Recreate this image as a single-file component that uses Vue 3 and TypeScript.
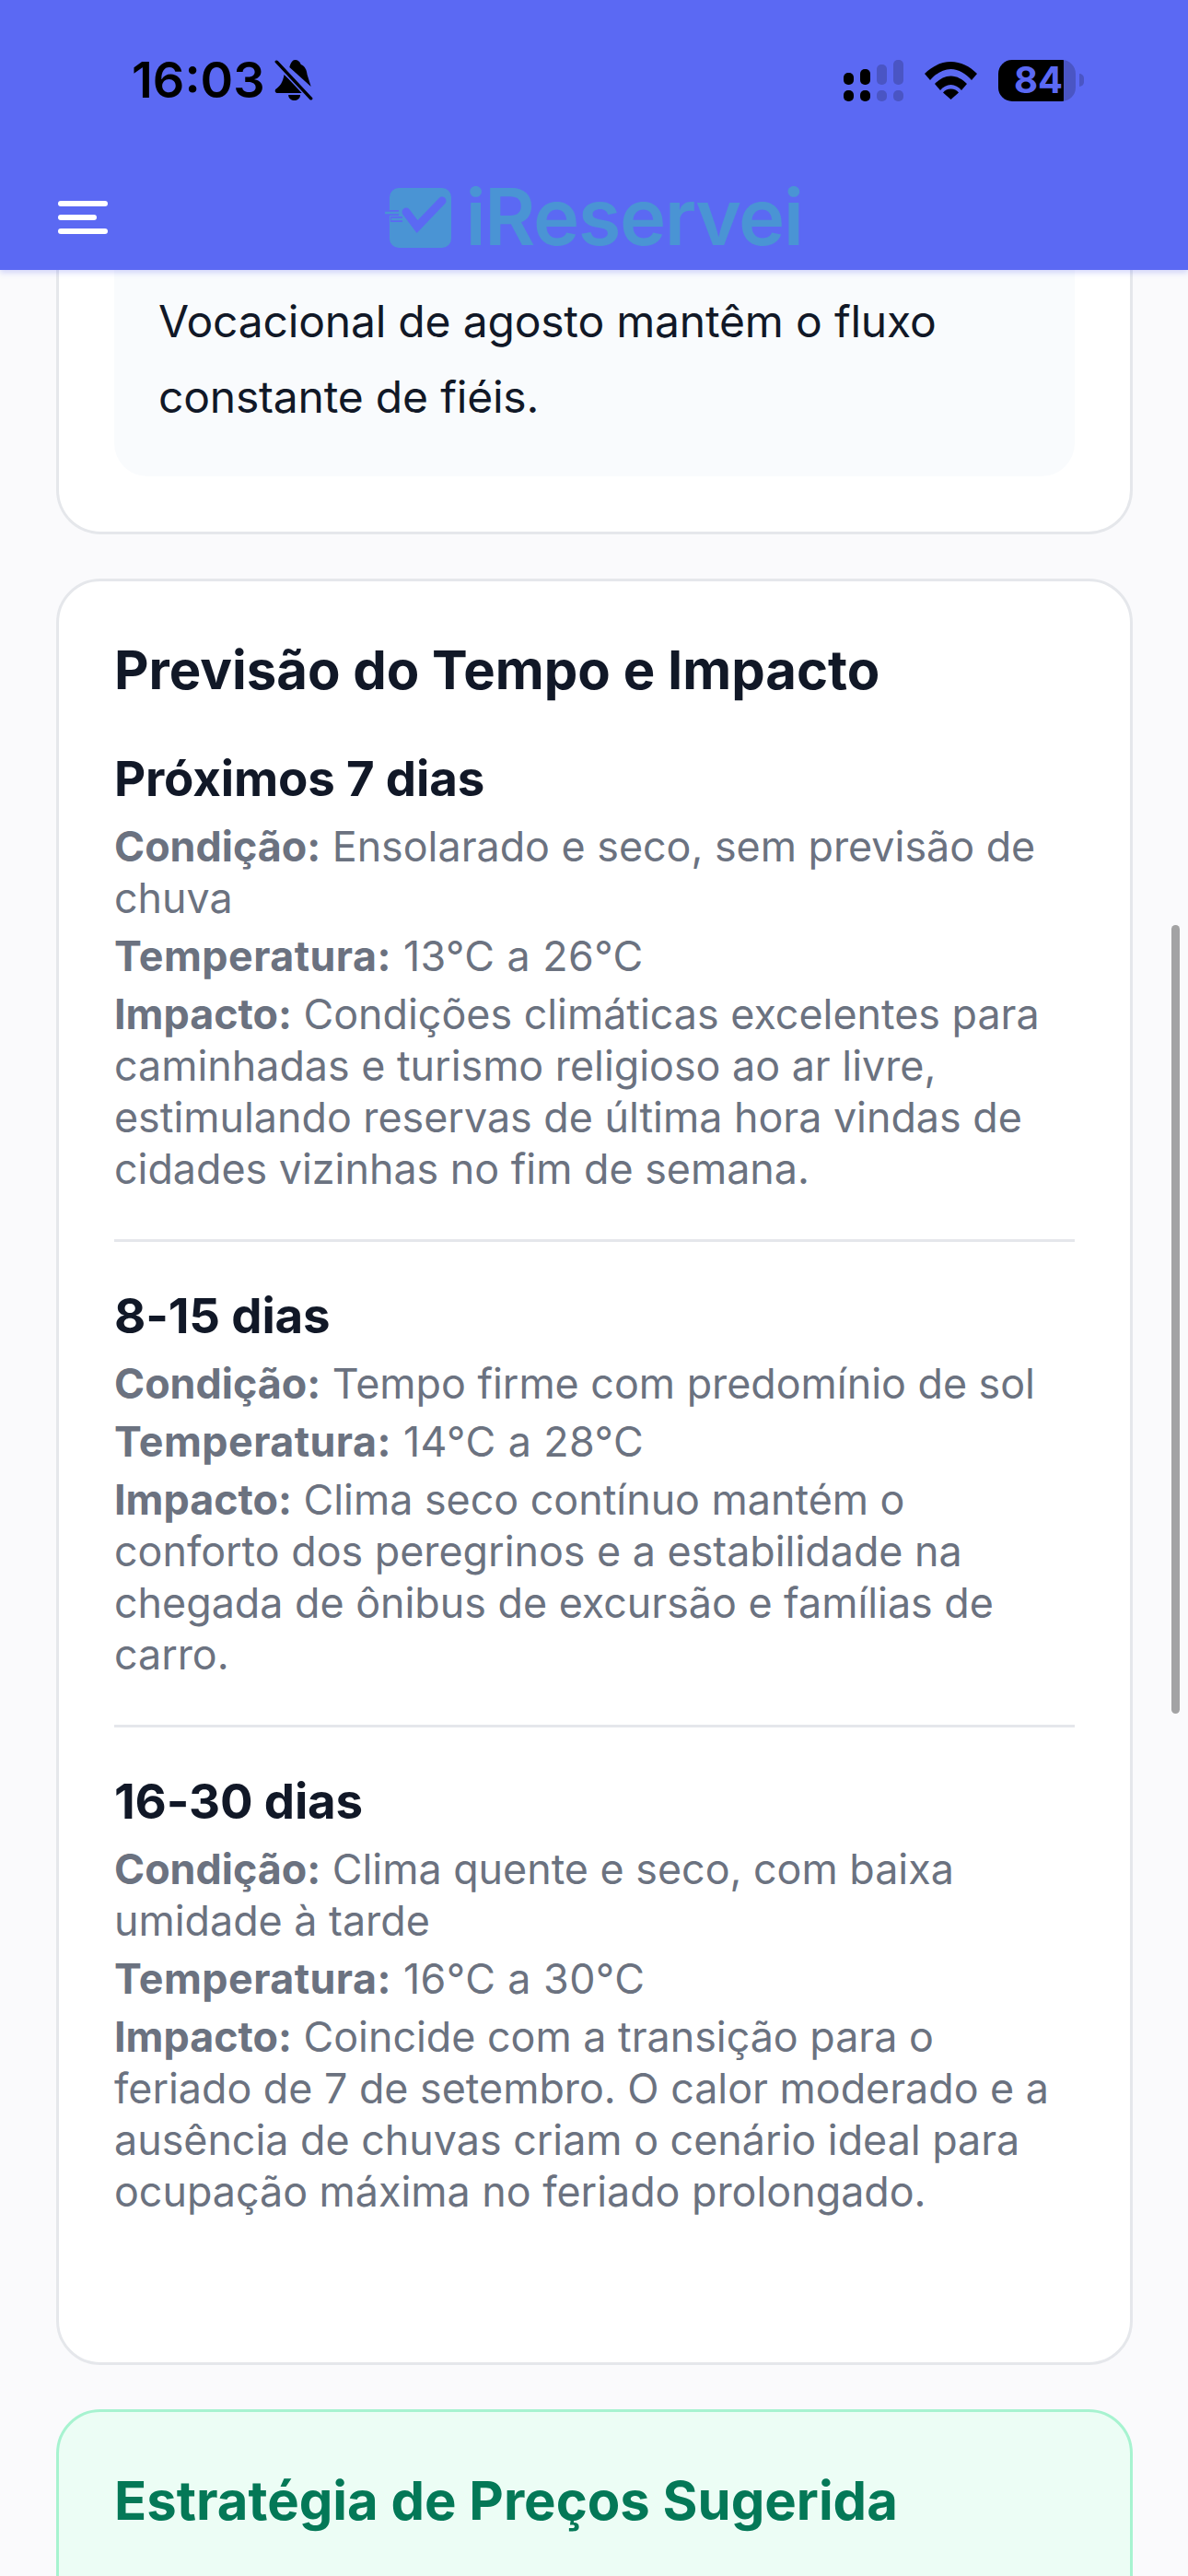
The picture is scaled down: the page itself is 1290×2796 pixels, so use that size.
<script setup lang="ts">
interface Forecast {
  title: string
  condition: string
  temperature: string
  impact: string
}

const forecasts: Forecast[] = [
  {
    title: 'Próximos 7 dias',
    condition: 'Ensolarado e seco, sem previsão de chuva',
    temperature: '13°C a 26°C',
    impact: 'Condições climáticas excelentes para caminhadas e turismo religioso ao ar livre, estimulando reservas de última hora vindas de cidades vizinhas no fim de semana.',
  },
  {
    title: '8-15 dias',
    condition: 'Tempo firme com predomínio de sol',
    temperature: '14°C a 28°C',
    impact: 'Clima seco contínuo mantém o conforto dos peregrinos e a estabilidade na chegada de ônibus de excursão e famílias de carro.',
  },
  {
    title: '16-30 dias',
    condition: 'Clima quente e seco, com baixa umidade à tarde',
    temperature: '16°C a 30°C',
    impact: 'Coincide com a transição para o feriado de 7 de setembro. O calor moderado e a ausência de chuvas criam o cenário ideal para ocupação máxima no feriado prolongado.',
  },
]
</script>

<template>
  <div class="screen">
    <header class="topbar">
      <div class="status">
        <div class="status__left">
          <span class="status__time">16:03</span>
          <svg class="status__bell" viewBox="0 0 36 46" width="42" height="46" preserveAspectRatio="none">
            <path d="M19 1c3 0 5 2 5.600 5 4 2 5.400 6 5.900 11l3.500 13-20-21c1-5 3-8 5-8zM9 17l19 20H3c-2 0-3-2-2-4 4-3 7-8 8-16z" fill="#000" />
            <path d="M13 39h11c0 4-3 6-5.500 6S13 43 13 39z" fill="#000" />
            <path d="M2 3l32 40" stroke="#5b69f3" stroke-width="6" />
            <path d="M2 3l32 40" stroke="#000" stroke-width="3" stroke-linecap="round" />
          </svg>
        </div>
        <div class="status__right">
          <svg viewBox="0 0 65 45" width="65" height="45">
            <g fill="#000">
              <rect x="0" y="14" width="11" height="13" rx="5" />
              <rect x="18" y="10" width="11" height="17" rx="5" />
              <rect x="0" y="33" width="11" height="12" rx="5" />
              <rect x="18" y="33" width="11" height="12" rx="5" />
            </g>
            <g fill="#4a55c4">
              <rect x="36" y="5" width="11" height="22" rx="5" />
              <rect x="54" y="0" width="11" height="27" rx="5" />
              <rect x="36" y="33" width="11" height="12" rx="5" />
              <rect x="54" y="33" width="11" height="12" rx="5" />
            </g>
          </svg>
          <svg class="status__wifi" viewBox="0 0 57 41" width="57" height="41">
            <path d="M0 13C8 5 18 0 28.500 0S49 5 57 13l-6 7C45 13 37 8 28.500 8S12 13 6 20z" fill="#000" />
            <path d="M11 24c5-5 11-8.500 17.500-8.500S41 19 46 24l-6 7c-3-3.500-7-6-11.500-6S20 27.500 17 31z" fill="#000" />
            <path d="M20 33.500c2-2.500 5-4 8.500-4s6.500 1.500 8.500 4L28.500 41z" fill="#000" />
          </svg>
          <div class="battery">
            <div class="battery__body">
              <span class="battery__level">84</span>
            </div>
            <span class="battery__nub"></span>
          </div>
        </div>
      </div>
      <nav class="nav">
        <button class="nav__menu" type="button" aria-label="Menu">
          <span></span>
          <span class="nav__menu-short"></span>
          <span></span>
        </button>
        <div class="logo">
          <svg viewBox="0 0 67 65" width="67" height="65">
            <rect x="0" y="0" width="67" height="65" rx="10" fill="#4a94d4" />
            <path d="M18 26l12 16L57 14" fill="none" stroke="#5b69f3" stroke-width="9" stroke-linecap="round" />
            <path d="M-6 27H10M1 34h13" stroke="#5b69f3" stroke-width="6" />
            <path d="M-5 27H10M2 34h12" stroke="#4a94d4" stroke-width="2.500" />
          </svg>
          <span class="logo__text">iReservei</span>
        </div>
        <span class="nav__spacer"></span>
      </nav>
    </header>

    <main class="content">
      <section class="card card--clipped">
        <div class="note">
          <p>Vocacional de agosto mantêm o fluxo constante de fiéis.</p>
        </div>
      </section>

      <section class="card card--weather">
        <h2 class="card__title">Previsão do Tempo e Impacto</h2>
        <article v-for="item in forecasts" :key="item.title" class="forecast">
          <h3 class="forecast__title">{{ item.title }}</h3>
          <p class="forecast__line"><strong>Condição:</strong> {{ item.condition }}</p>
          <p class="forecast__line forecast__line--temp"><strong>Temperatura:</strong> {{ item.temperature }}</p>
          <p class="forecast__line"><strong>Impacto:</strong> {{ item.impact }}</p>
        </article>
      </section>

      <section class="card card--pricing">
        <h2 class="card__title card__title--green">Estratégia de Preços Sugerida</h2>
      </section>
    </main>

    <div class="scrollbar"></div>
  </div>
</template>

<style>
html,
body {
  margin: 0;
  background: #fafafc;
}
</style>

<style scoped>
.screen {
  position: relative;
  width: 1290px;
  height: 2796px;
  overflow: hidden;
  display: flex;
  flex-direction: column;
  background: #fafafc;
  font-family: Inter, "Liberation Sans", sans-serif;
  color: #111827;
}

.topbar {
  position: relative;
  z-index: 2;
  flex: none;
  height: 293px;
  box-sizing: border-box;
  background: #5b69f3;
  box-shadow: 0 3px 6px rgba(91, 105, 243, 0.25);
}

.status {
  display: flex;
  justify-content: space-between;
  height: 64px;
  padding: 64px 113px 0 143px;
}

.status__left {
  display: flex;
  align-items: center;
  gap: 10px;
  height: 46px;
}

.status__time {
  font-size: 54px;
  font-weight: 600;
  line-height: 46px;
  color: #000;
}

.status__right {
  display: flex;
  align-items: center;
  gap: 23px;
  height: 46px;
}

.battery {
  display: flex;
  align-items: center;
  gap: 4px;
}

.battery__body {
  width: 84px;
  height: 45px;
  border-radius: 15px;
  background: linear-gradient(90deg, #000 71px, #4a55c4 71px);
  display: flex;
  align-items: center;
  padding-left: 17px;
  box-sizing: border-box;
}

.battery__level {
  font-size: 40px;
  font-weight: 700;
  line-height: 1;
  color: #5b69f3;
}

.battery__nub {
  width: 5px;
  height: 14px;
  border-radius: 0 7px 7px 0;
  background: #4a55c4;
}

.nav {
  display: grid;
  grid-template-columns: 1fr auto 1fr;
  align-items: center;
  padding: 75px 58px 0 63px;
}

.nav__menu {
  display: flex;
  flex-direction: column;
  gap: 9px;
  width: 54px;
  padding: 0;
  border: 0;
  background: none;
}

.nav__menu span {
  display: block;
  width: 54px;
  height: 6px;
  border-radius: 3px;
  background: #fff;
}

.nav__menu .nav__menu-short {
  width: 42px;
}

.logo {
  display: flex;
  align-items: center;
  gap: 15px;
  height: 66px;
}

.logo svg {
  overflow: visible;
}

.logo__text {
  font-size: 85px;
  font-weight: 600;
  line-height: 66px;
  color: #4a94d4;
  letter-spacing: -1.500px;
}

.content {
  flex: 1;
  min-height: 0;
  display: flex;
  flex-direction: column;
  gap: 48px;
  padding: 0 60px 0 61px;
}

.card {
  flex: none;
  box-sizing: border-box;
  border: 3px solid #e5e7eb;
  border-radius: 48px;
  background: #fff;
  padding: 60px;
}

.card--clipped {
  border-top: 0;
  border-top-left-radius: 0;
  border-top-right-radius: 0;
  padding-top: 0;
}

.card--pricing {
  min-height: 400px;
  border-color: #a7f3d0;
  background: #ecfdf5;
}

.note {
  padding: 15px 48px 46px;
  border-radius: 0 0 36px 36px;
  background: #f9fbfd;
}

.note p {
  margin: 0;
  font-size: 48px;
  line-height: 81.600px;
  letter-spacing: -0.200px;
}

.card__title {
  margin: 0 0 48px;
  font-size: 58px;
  font-weight: 700;
  line-height: 72px;
}

.card__title--green {
  color: #047857;
}

.forecast {
  padding-bottom: 48px;
  margin-bottom: 46px;
  border-bottom: 3px solid #e5e7eb;
}

.forecast:last-child {
  border-bottom: 0;
  margin-bottom: 0;
  padding-bottom: 97px;
}

.forecast__title {
  margin: 0 0 12px;
  font-size: 52.800px;
  font-weight: 700;
  line-height: 68px;
  letter-spacing: -0.150px;
}

.forecast__line {
  margin: 7px 0 0;
  font-size: 44.800px;
  line-height: 56px;
  color: #6b7280;
}

.forecast__line--temp {
  letter-spacing: 0.450px;
}

.forecast__line strong {
  font-weight: 700;
}

.scrollbar {
  position: absolute;
  z-index: 3;
  top: 1004px;
  right: 9px;
  width: 9px;
  height: 856px;
  border-radius: 5px;
  background: rgba(0, 0, 0, 0.35);
}
</style>
